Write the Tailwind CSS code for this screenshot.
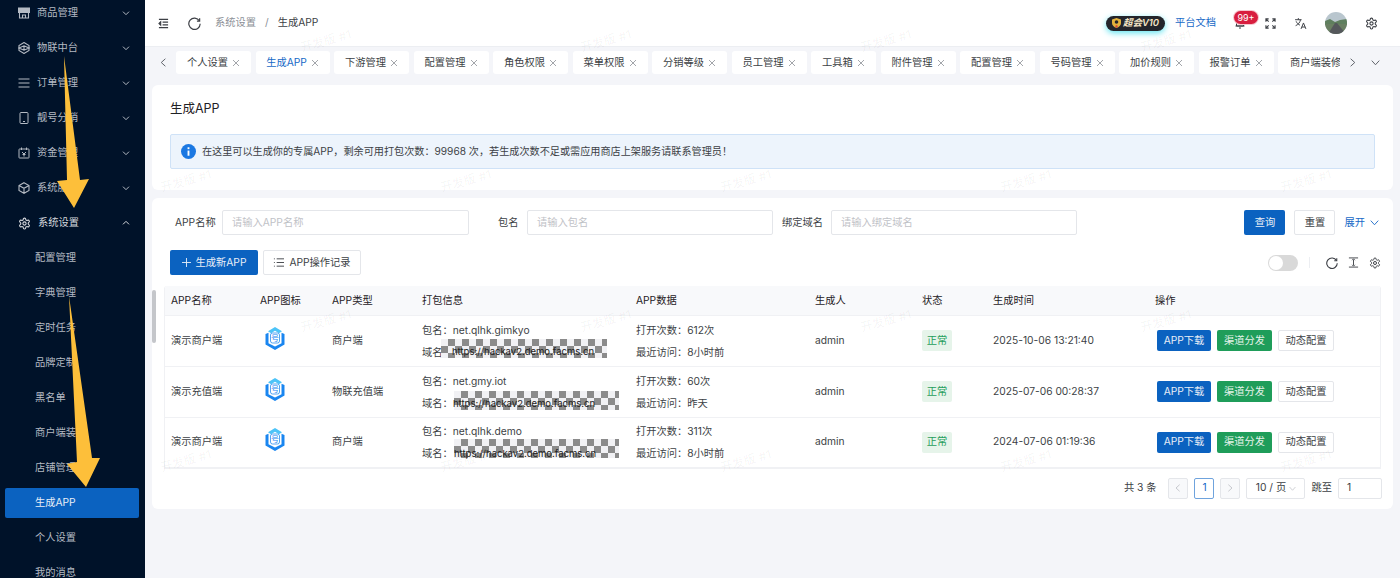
<!DOCTYPE html>
<html lang="zh-CN">
<head>
    <meta charset="UTF-8">
    <title>生成APP</title>
    <script src="https://cdn.jsdelivr.net/npm/@tailwindcss/browser@4"></script>
</head>
<body class="relative h-[578px] w-[1400px] overflow-hidden bg-[#f4f5f9] font-['Inter','Noto_Sans_CJK_SC',sans-serif] text-[10.25px] text-[#3c3f45]">
<div class="flex h-[578px]">
    <!-- Sidebar -->
    <aside class="w-[145px] shrink-0 overflow-hidden bg-[#001229] text-[#b4bac3]">
        <div class="-mt-[4.5px] pl-[5px] pr-[6px]">
            <div class="flex h-[35px] items-center pl-[13px] pr-[9px]">
                <svg class="mr-[7px] h-[12px] w-[12px]" viewBox="0 0 24 24" fill="none" stroke="currentColor" stroke-width="2.2"><path d="M1 2h22v9H1z" fill="currentColor"/><path d="M3 11v11h18V11M9 22v-6h6v6"/></svg>
                <span class="flex-1">商品管理</span>
                <svg class="h-[8px] w-[8px]" viewBox="0 0 12 12" fill="none" stroke="currentColor" stroke-width="1.5"><path d="M1.5 4L6 8.5 10.500 4"/></svg>
            </div>
            <div class="flex h-[35px] items-center pl-[13px] pr-[9px]">
                <svg class="mr-[7px] h-[12px] w-[12px]" viewBox="0 0 24 24" fill="none" stroke="currentColor" stroke-width="2.2"><path d="M12 1l10 6v10l-10 6-10-6V7z"/><path d="M2 12l10-4.500L22 12l-10 4.500zM12 7.500v9"/></svg>
                <span class="flex-1">物联中台</span>
                <svg class="h-[8px] w-[8px]" viewBox="0 0 12 12" fill="none" stroke="currentColor" stroke-width="1.5"><path d="M1.5 4L6 8.5 10.500 4"/></svg>
            </div>
            <div class="flex h-[35px] items-center pl-[13px] pr-[9px]">
                <svg class="mr-[7px] h-[12px] w-[12px]" viewBox="0 0 24 24" fill="none" stroke="currentColor" stroke-width="2.2"><path d="M1 4h22M1 12h22M1 20h22"/></svg>
                <span class="flex-1">订单管理</span>
                <svg class="h-[8px] w-[8px]" viewBox="0 0 12 12" fill="none" stroke="currentColor" stroke-width="1.5"><path d="M1.5 4L6 8.5 10.500 4"/></svg>
            </div>
            <div class="flex h-[35px] items-center pl-[13px] pr-[9px]">
                <svg class="mr-[7px] h-[12px] w-[12px]" viewBox="0 0 24 24" fill="none" stroke="currentColor" stroke-width="2"><rect x="4" y="1" width="16" height="22" rx="2"/><path d="M10 19h4"/></svg>
                <span class="flex-1">靓号分销</span>
                <svg class="h-[8px] w-[8px]" viewBox="0 0 12 12" fill="none" stroke="currentColor" stroke-width="1.5"><path d="M1.5 4L6 8.5 10.500 4"/></svg>
            </div>
            <div class="flex h-[35px] items-center pl-[13px] pr-[9px]">
                <svg class="mr-[7px] h-[12px] w-[12px]" viewBox="0 0 24 24" fill="none" stroke="currentColor" stroke-width="2"><rect x="2" y="4" width="20" height="18" rx="1"/><path d="M7 1v5M17 1v5M8 10l4 4 4-4M12 14v5M9 15h6"/></svg>
                <span class="flex-1">资金管理</span>
                <svg class="h-[8px] w-[8px]" viewBox="0 0 12 12" fill="none" stroke="currentColor" stroke-width="1.5"><path d="M1.5 4L6 8.5 10.500 4"/></svg>
            </div>
            <div class="flex h-[35px] items-center pl-[13px] pr-[9px]">
                <svg class="mr-[7px] h-[12px] w-[12px]" viewBox="0 0 24 24" fill="none" stroke="currentColor" stroke-width="2.2"><path d="M12 1.500l10 5.500v10l-10 5.500L2 17V7zM2 7l10 5.500L22 7M12 12.500v10"/></svg>
                <span class="flex-1">系统服务</span>
                <svg class="h-[8px] w-[8px]" viewBox="0 0 12 12" fill="none" stroke="currentColor" stroke-width="1.5"><path d="M1.5 4L6 8.5 10.500 4"/></svg>
            </div>
            <div class="flex h-[35px] items-center pl-[13px] pr-[9px] text-[#d5d8dd]">
                <svg class="mr-[7px] h-[13px] w-[13px]" viewBox="0 0 24 24" fill="none" stroke="currentColor" stroke-width="2"><path d="M12.22 2h-.44a2 2 0 0 0-2 2v.18a2 2 0 0 1-1 1.730l-.43.25a2 2 0 0 1-2 0l-.15-.08a2 2 0 0 0-2.730.73l-.22.38a2 2 0 0 0 .73 2.730l.15.1a2 2 0 0 1 1 1.720v.51a2 2 0 0 1-1 1.740l-.15.09a2 2 0 0 0-.73 2.730l.22.38a2 2 0 0 0 2.730.73l.15-.08a2 2 0 0 1 2 0l.43.25a2 2 0 0 1 1 1.730V20a2 2 0 0 0 2 2h.44a2 2 0 0 0 2-2v-.18a2 2 0 0 1 1-1.730l.43-.25a2 2 0 0 1 2 0l.15.08a2 2 0 0 0 2.730-.73l.22-.39a2 2 0 0 0-.73-2.730l-.15-.08a2 2 0 0 1-1-1.740v-.5a2 2 0 0 1 1-1.740l.15-.09a2 2 0 0 0 .73-2.730l-.22-.38a2 2 0 0 0-2.730-.73l-.15.08a2 2 0 0 1-2 0l-.43-.25a2 2 0 0 1-1-1.730V4a2 2 0 0 0-2-2z"/><circle cx="12" cy="12" r="3"/></svg>
                <span class="flex-1">系统设置</span>
                <svg class="h-[8px] w-[8px]" viewBox="0 0 12 12" fill="none" stroke="currentColor" stroke-width="1.5"><path d="M1.5 8L6 3.500 10.500 8"/></svg>
            </div>
            <div class="flex h-[35px] items-center pl-[30px]">配置管理</div>
            <div class="flex h-[35px] items-center pl-[30px]">字典管理</div>
            <div class="flex h-[35px] items-center pl-[30px]">定时任务</div>
            <div class="flex h-[35px] items-center pl-[30px]">品牌定制</div>
            <div class="flex h-[35px] items-center pl-[30px]">黑名单</div>
            <div class="flex h-[35px] items-center pl-[30px]">商户端装修</div>
            <div class="flex h-[35px] items-center pl-[30px]">店铺管理</div>
            <div class="my-[2.5px] flex h-[30px] items-center rounded-[2px] bg-[#0b62c0] pl-[30px] text-[#e8eef7]">生成APP</div>
            <div class="flex h-[35px] items-center pl-[30px]">个人设置</div>
            <div class="flex h-[35px] items-center pl-[30px]">我的消息</div>
        </div>
    </aside>

    <div class="flex min-w-0 flex-1 flex-col">
        <!-- Top bar -->
        <header class="flex h-[47px] shrink-0 items-center border-b border-[#eceef2] bg-white pl-[13px] pr-[22px]">
            <svg class="h-[11px] w-[11px] text-[#3c3f45]" viewBox="0 0 12 12" fill="none" stroke="currentColor" stroke-width="1.1"><path d="M1 1.500h10M5 4.500h6M5 7.500h6M1 10.500h10"/><path d="M3 4L1 6l2 2z" fill="currentColor"/></svg>
            <svg class="ml-[19px] h-[13px] w-[13px] text-[#3c3f45]" viewBox="0 0 24 24" fill="none" stroke="currentColor" stroke-width="2.200"><path d="M21 7a10.500 10.500 0 1 0 1.500 5.500"/><path d="M21.500 2.500V7.500H16.500"/></svg>
            <span class="ml-[14px] text-[#8b8f96]">系统设置</span>
            <span class="ml-[9px] text-[#8b8f96]">/</span>
            <span class="ml-[9px]">生成APP</span>
            <div class="ml-auto mr-[10px] flex h-[15px] w-[59px] items-center justify-center gap-[2px] rounded-full bg-[#23252b] text-[9.500px] font-semibold italic text-[#f4e6c8] shadow-[0_2px_6px_#5ee4f0]">
                <svg class="h-[10px] w-[9px]" viewBox="0 0 9 10"><path d="M4.500 0L9 1.500V5c0 2.500-2 4-4.500 5C2 9 0 7.500 0 5V1.500z" fill="#e3b23c"/><circle cx="4.500" cy="4" r="1.800" fill="#23252b"/><path d="M3 8l1.500-1L6 8 4.500 10z" fill="#d94a3d"/></svg>超会V10
            </div>
            <span class="text-[#1769c7]">平台文档</span>
            <div class="relative ml-[18px] h-[12px] w-[12px]">
                <svg class="h-[12px] w-[12px] text-[#3c3f45]" viewBox="0 0 24 24" fill="none" stroke="currentColor" stroke-width="2"><path d="M5 18V10a7 7 0 0 1 14 0v8zM3 18h18M10 22h4"/></svg>
                <span class="absolute -top-[6px] -right-[12px] flex h-[13px] w-[24px] items-center justify-center rounded-full bg-[#d81e3f] text-[9px] text-white shadow-[0_0_0_1px_#f6c7cf]">99+</span>
            </div>
            <svg class="ml-[19px] h-[11px] w-[11px] text-[#3c3f45]" viewBox="0 0 12 12" fill="none" stroke="currentColor" stroke-width="1.200"><path d="M1 4V1h3M1 1l3 3M11 4V1H8M11 1L8 4M1 8v3h3M1 11l3-3M11 8v3H8M11 11L8 8"/></svg>
            <svg class="ml-[18px] h-[13px] w-[13px] text-[#3c3f45]" viewBox="0 0 24 24" fill="none" stroke="currentColor" stroke-width="1.800"><path d="M2 5h12M8 2v3M12 5c-1 5-4 9-9 11M4 8c1 3 4 6 7 7M13 22l4.500-11L22 22M14.500 18.500h6"/></svg>
            <svg class="ml-[18px] h-[22px] w-[22px] rounded-full" viewBox="0 0 22 22"><rect width="22" height="22" fill="#b9c6ce"/><path d="M0 9l5-2 5 3 5-2 7-1v6H0z" fill="#5f7f5e"/><path d="M0 12h22v10H0z" fill="#6a7f62"/><path d="M10 11h2l9 11H3z" fill="#55585c"/></svg>
            <svg class="ml-[18px] h-[13px] w-[13px] text-[#3c3f45]" viewBox="0 0 24 24" fill="none" stroke="currentColor" stroke-width="2"><path d="M12.22 2h-.44a2 2 0 0 0-2 2v.18a2 2 0 0 1-1 1.730l-.43.25a2 2 0 0 1-2 0l-.15-.08a2 2 0 0 0-2.730.73l-.22.38a2 2 0 0 0 .73 2.730l.15.1a2 2 0 0 1 1 1.720v.51a2 2 0 0 1-1 1.740l-.15.09a2 2 0 0 0-.73 2.730l.22.38a2 2 0 0 0 2.730.73l.15-.08a2 2 0 0 1 2 0l.43.25a2 2 0 0 1 1 1.730V20a2 2 0 0 0 2 2h.44a2 2 0 0 0 2-2v-.18a2 2 0 0 1 1-1.730l.43-.25a2 2 0 0 1 2 0l.15.08a2 2 0 0 0 2.730-.73l.22-.39a2 2 0 0 0-.73-2.730l-.15-.08a2 2 0 0 1-1-1.740v-.5a2 2 0 0 1 1-1.740l.15-.09a2 2 0 0 0 .73-2.730l-.22-.38a2 2 0 0 0-2.730-.73l-.15.08a2 2 0 0 1-2 0l-.43-.25a2 2 0 0 1-1-1.730V4a2 2 0 0 0-2-2z"/><circle cx="12" cy="12" r="3"/></svg>
        </header>

        <!-- Tabs -->
        <div class="flex h-[31px] shrink-0 items-start pt-[4px]">
            <div class="flex h-[23px] w-[31px] shrink-0 items-center justify-center pb-[1px] pl-[6px] text-[#5c6068]">
                <svg class="h-[9px] w-[9px]" viewBox="0 0 12 12" fill="none" stroke="currentColor" stroke-width="1.300"><path d="M8.500 1L3 6l5.500 5"/></svg>
            </div>
            <div class="flex w-[1164px] shrink-0 gap-[4.500px] overflow-hidden">
                <div class="flex h-[23px] w-[75px] shrink-0 items-center justify-center gap-[4px] rounded-[3px] bg-white">个人设置<svg class="h-[8px] w-[8px] text-[#8b8f96]" viewBox="0 0 8 8" fill="none" stroke="currentColor" stroke-width=".8"><path d="M1 1l6 6M7 1L1 7"/></svg></div>
                <div class="flex h-[23px] w-[74px] shrink-0 items-center justify-center gap-[4px] rounded-[3px] bg-white text-[#1769c7]">生成APP<svg class="h-[8px] w-[8px] text-[#8b8f96]" viewBox="0 0 8 8" fill="none" stroke="currentColor" stroke-width=".8"><path d="M1 1l6 6M7 1L1 7"/></svg></div>
                <div class="flex h-[23px] w-[75px] shrink-0 items-center justify-center gap-[4px] rounded-[3px] bg-white">下游管理<svg class="h-[8px] w-[8px] text-[#8b8f96]" viewBox="0 0 8 8" fill="none" stroke="currentColor" stroke-width=".8"><path d="M1 1l6 6M7 1L1 7"/></svg></div>
                <div class="flex h-[23px] w-[75px] shrink-0 items-center justify-center gap-[4px] rounded-[3px] bg-white">配置管理<svg class="h-[8px] w-[8px] text-[#8b8f96]" viewBox="0 0 8 8" fill="none" stroke="currentColor" stroke-width=".8"><path d="M1 1l6 6M7 1L1 7"/></svg></div>
                <div class="flex h-[23px] w-[75px] shrink-0 items-center justify-center gap-[4px] rounded-[3px] bg-white">角色权限<svg class="h-[8px] w-[8px] text-[#8b8f96]" viewBox="0 0 8 8" fill="none" stroke="currentColor" stroke-width=".8"><path d="M1 1l6 6M7 1L1 7"/></svg></div>
                <div class="flex h-[23px] w-[75px] shrink-0 items-center justify-center gap-[4px] rounded-[3px] bg-white">菜单权限<svg class="h-[8px] w-[8px] text-[#8b8f96]" viewBox="0 0 8 8" fill="none" stroke="currentColor" stroke-width=".8"><path d="M1 1l6 6M7 1L1 7"/></svg></div>
                <div class="flex h-[23px] w-[75px] shrink-0 items-center justify-center gap-[4px] rounded-[3px] bg-white">分销等级<svg class="h-[8px] w-[8px] text-[#8b8f96]" viewBox="0 0 8 8" fill="none" stroke="currentColor" stroke-width=".8"><path d="M1 1l6 6M7 1L1 7"/></svg></div>
                <div class="flex h-[23px] w-[75px] shrink-0 items-center justify-center gap-[4px] rounded-[3px] bg-white">员工管理<svg class="h-[8px] w-[8px] text-[#8b8f96]" viewBox="0 0 8 8" fill="none" stroke="currentColor" stroke-width=".8"><path d="M1 1l6 6M7 1L1 7"/></svg></div>
                <div class="flex h-[23px] w-[65px] shrink-0 items-center justify-center gap-[4px] rounded-[3px] bg-white">工具箱<svg class="h-[8px] w-[8px] text-[#8b8f96]" viewBox="0 0 8 8" fill="none" stroke="currentColor" stroke-width=".8"><path d="M1 1l6 6M7 1L1 7"/></svg></div>
                <div class="flex h-[23px] w-[75px] shrink-0 items-center justify-center gap-[4px] rounded-[3px] bg-white">附件管理<svg class="h-[8px] w-[8px] text-[#8b8f96]" viewBox="0 0 8 8" fill="none" stroke="currentColor" stroke-width=".8"><path d="M1 1l6 6M7 1L1 7"/></svg></div>
                <div class="flex h-[23px] w-[75px] shrink-0 items-center justify-center gap-[4px] rounded-[3px] bg-white">配置管理<svg class="h-[8px] w-[8px] text-[#8b8f96]" viewBox="0 0 8 8" fill="none" stroke="currentColor" stroke-width=".8"><path d="M1 1l6 6M7 1L1 7"/></svg></div>
                <div class="flex h-[23px] w-[75px] shrink-0 items-center justify-center gap-[4px] rounded-[3px] bg-white">号码管理<svg class="h-[8px] w-[8px] text-[#8b8f96]" viewBox="0 0 8 8" fill="none" stroke="currentColor" stroke-width=".8"><path d="M1 1l6 6M7 1L1 7"/></svg></div>
                <div class="flex h-[23px] w-[75px] shrink-0 items-center justify-center gap-[4px] rounded-[3px] bg-white">加价规则<svg class="h-[8px] w-[8px] text-[#8b8f96]" viewBox="0 0 8 8" fill="none" stroke="currentColor" stroke-width=".8"><path d="M1 1l6 6M7 1L1 7"/></svg></div>
                <div class="flex h-[23px] w-[75px] shrink-0 items-center justify-center gap-[4px] rounded-[3px] bg-white">报警订单<svg class="h-[8px] w-[8px] text-[#8b8f96]" viewBox="0 0 8 8" fill="none" stroke="currentColor" stroke-width=".8"><path d="M1 1l6 6M7 1L1 7"/></svg></div>
                <div class="flex h-[23px] w-[62px] shrink-0 items-center rounded-l-[3px] bg-white pl-[12px] whitespace-nowrap">商户端装修</div>
            </div>
            <div class="flex h-[23px] flex-1 items-center pb-[1px] pl-[8px] text-[#5c6068]">
                <svg class="h-[9px] w-[9px]" viewBox="0 0 12 12" fill="none" stroke="currentColor" stroke-width="1.300"><path d="M3.500 1L9 6l-5.500 5"/></svg>
                <svg class="ml-[14px] h-[9px] w-[9px]" viewBox="0 0 12 12" fill="none" stroke="currentColor" stroke-width="1.300"><path d="M1 3.500L6 9l5-5.500"/></svg>
            </div>
        </div>

        <!-- Content -->
        <main class="flex flex-col gap-[8px] pl-[7px] pr-[7px] pt-[7px]">
            <section class="h-[105px] rounded-[6px] bg-white px-[18px] pt-[15px]">
                <h1 class="text-[12.500px] leading-[17px] font-normal text-[#1f2125]">生成APP</h1>
                <div class="mt-[17px] flex h-[35px] items-center rounded-[2px] border border-[#cfe2f7] bg-[#edf4fc] pl-[10px]">
                    <svg class="h-[15px] w-[15px]" viewBox="0 0 16 16"><circle cx="8" cy="8" r="8" fill="#1b78e2"/><rect x="7" y="7" width="2" height="5.500" fill="#fff"/><rect x="7" y="3.500" width="2" height="2" fill="#fff"/></svg>
                    <span class="ml-[6px] text-[10.150px]">在这里可以生成你的专属APP，剩余可用打包次数：99968 次，若生成次数不足或需应用商店上架服务请联系管理员！</span>
                </div>
            </section>

            <section class="h-[311px] rounded-[6px] bg-white pt-[12px]">
                <!-- Search -->
                <div class="flex h-[25px] items-center pl-[23px] pr-[14px]">
                    <span class="w-[47px]">APP名称</span>
                    <div class="flex h-[25px] w-[247px] items-center rounded-[2px] border border-[#e4e6ea] pl-[9px] text-[#bfc2c7]">请输入APP名称</div>
                    <span class="ml-[29px] w-[29px]">包名</span>
                    <div class="flex h-[25px] w-[246px] items-center rounded-[2px] border border-[#e4e6ea] pl-[9px] text-[#bfc2c7]">请输入包名</div>
                    <span class="ml-[9px] w-[49px]">绑定域名</span>
                    <div class="flex h-[25px] w-[246px] items-center rounded-[2px] border border-[#e4e6ea] pl-[9px] text-[#bfc2c7]">请输入绑定域名</div>
                    <button class="ml-auto flex h-[25px] w-[41px] items-center justify-center rounded-[2px] bg-[#0b62c0] text-[#e8eef7]">查询</button>
                    <button class="ml-[9px] flex h-[25px] w-[41px] items-center justify-center rounded-[2px] border border-[#e4e6ea]">重置</button>
                    <span class="ml-[9px] text-[#1769c7]">展开</span>
                    <svg class="ml-[5px] h-[9px] w-[9px] text-[#1769c7]" viewBox="0 0 12 12" fill="none" stroke="currentColor" stroke-width="1.200"><path d="M1 3.500L6 9l5-5.500"/></svg>
                </div>

                <!-- Toolbar -->
                <div class="mt-[15px] flex h-[25px] items-center pl-[18px] pr-[12px]">
                    <button class="flex h-[25px] w-[88px] items-center justify-center gap-[5px] rounded-[2px] bg-[#0b62c0] text-[#e8eef7]">
                        <svg class="h-[9px] w-[9px]" viewBox="0 0 10 10" fill="none" stroke="currentColor" stroke-width="1"><path d="M5 0v10M0 5h10"/></svg>生成新APP
                    </button>
                    <button class="ml-[5px] flex h-[25px] w-[98px] items-center justify-center gap-[5px] rounded-[2px] border border-[#e4e6ea]">
                        <svg class="h-[11px] w-[11px]" viewBox="0 0 12 12" fill="none" stroke="currentColor" stroke-width="1"><path d="M4 2h8M4 6h8M4 10h8M1 2h1M1 6h1M1 10h1"/></svg>APP操作记录
                    </button>
                    <div class="ml-auto flex h-[16px] w-[30px] items-center rounded-full bg-[#d9d9d9] pl-[1px]"><span class="h-[14px] w-[14px] rounded-full bg-white"></span></div>
                    <span class="ml-[11px] mr-px h-[11px] w-px bg-[#eceef2]"></span>
                    <svg class="ml-[15px] h-[12px] w-[12px]" viewBox="0 0 24 24" fill="none" stroke="currentColor" stroke-width="2.200"><path d="M21 7a10.500 10.500 0 1 0 1.500 5.500"/><path d="M21.500 2.500V7.500H16.500"/></svg>
                    <svg class="ml-[10px] h-[11px] w-[11px]" viewBox="0 0 12 12" fill="none" stroke="currentColor" stroke-width="1"><path d="M1 1h10M1 11h10M6 3v6"/><path d="M4.500 3.500L6 2l1.500 1.500M4.500 8.500L6 10l1.500-1.500"/></svg>
                    <svg class="ml-[10px] h-[12px] w-[12px]" viewBox="0 0 24 24" fill="none" stroke="currentColor" stroke-width="2"><path d="M12.22 2h-.44a2 2 0 0 0-2 2v.18a2 2 0 0 1-1 1.730l-.43.25a2 2 0 0 1-2 0l-.15-.08a2 2 0 0 0-2.730.73l-.22.38a2 2 0 0 0 .73 2.730l.15.1a2 2 0 0 1 1 1.720v.51a2 2 0 0 1-1 1.740l-.15.09a2 2 0 0 0-.73 2.730l.22.38a2 2 0 0 0 2.730.73l.15-.08a2 2 0 0 1 2 0l.43.25a2 2 0 0 1 1 1.730V20a2 2 0 0 0 2 2h.44a2 2 0 0 0 2-2v-.18a2 2 0 0 1 1-1.730l.43-.25a2 2 0 0 1 2 0l.15.08a2 2 0 0 0 2.730-.73l.22-.39a2 2 0 0 0-.73-2.730l-.15-.08a2 2 0 0 1-1-1.740v-.5a2 2 0 0 1 1-1.740l.15-.09a2 2 0 0 0 .73-2.730l-.22-.38a2 2 0 0 0-2.730-.73l-.15.08a2 2 0 0 1-2 0l-.43-.25a2 2 0 0 1-1-1.730V4a2 2 0 0 0-2-2z"/><circle cx="12" cy="12" r="3"/></svg>
                </div>

                <!-- Table -->
                <div class="mx-[12px] mt-[11px] w-[1217px] overflow-hidden rounded-t-[3px] border border-[#f0f1f4] border-t-0">
                    <table class="w-full table-fixed border-collapse text-left">
                        <thead class="bg-[#f8f9fb] text-[#1f2125]">
                            <tr class="h-[29px]">
                                <th class="w-[89px] pl-[6px] font-normal">APP名称</th>
                                <th class="w-[72px] pl-[6px] font-normal">APP图标</th>
                                <th class="w-[90px] pl-[6px] font-normal">APP类型</th>
                                <th class="w-[214px] pl-[6px] font-normal">打包信息</th>
                                <th class="w-[179px] pl-[6px] font-normal">APP数据</th>
                                <th class="w-[107px] pl-[6px] font-normal">生成人</th>
                                <th class="w-[71px] pl-[6px] font-normal">状态</th>
                                <th class="w-[162px] pl-[6px] font-normal">生成时间</th>
                                <th class="pl-[6px] font-normal">操作</th>
                            </tr>
                        </thead>
                        <tbody>
                            <tr class="h-[51px] border-t border-[#f0f1f4]">
                                <td class="pl-[6px]">演示商户端</td>
                                <td class="pl-[11px]">
                                    <svg class="-mt-[5px] block h-[23px] w-[20px]" viewBox="0 0 20 23"><path d="M10 0l7 4.300-3 1.900-4-2.500-4 2.500-3-1.900z" fill="#4cc4f8"/><path d="M.5 7l3-1.200v10.400l6.500 3.400 6.500-3.400V5.800l3 1.200v10.500L10 23 .5 17.500z" fill="#1a86f0"/><rect x="5.500" y="6" width="9" height="10" rx="2" fill="none" stroke="#2a8ff0" stroke-width=".8"/><text x="10" y="14" text-anchor="middle" font-size="8" fill="#1a86f0">号</text></svg>
                                </td>
                                <td class="pl-[6px]">商户端</td>
                                <td class="pl-[6px]">
                                    <div class="leading-[22px]">包名：net.qlhk.gimkyo</div>
                                    <div class="relative leading-[22px]">域名<span class="absolute left-[19px] -top-[1.500px] h-[19px] w-[166px] bg-[conic-gradient(#8b8b8b_25%,#f1f1f4_0_50%,#8b8b8b_0_75%,#f1f1f4_0)] bg-[length:14px_14px] pl-[11px] text-[9.500px] leading-[26px] text-[#222] whitespace-nowrap">https://hackav2.demo.facms.cn</span></div>
                                </td>
                                <td class="pl-[6px]">
                                    <div class="leading-[22px]">打开次数：612次</div>
                                    <div class="leading-[22px]">最近访问：8小时前</div>
                                </td>
                                <td class="pl-[6px]">admin</td>
                                <td class="pl-[6px]"><span class="flex h-[21px] w-[30px] items-center justify-center rounded-[2px] bg-[#e6f4ea] text-[#1f9d5a]">正常</span></td>
                                <td class="pl-[6px]">2025-10-06 13:21:40</td>
                                <td class="pl-[8px]">
                                    <div class="flex gap-[6px]">
                                        <button class="h-[21px] w-[54px] rounded-[2px] bg-[#0b62c0] text-[#e8eef7]">APP下载</button>
                                        <button class="h-[21px] w-[55px] rounded-[2px] bg-[#1f9d5a] text-[#e4f3ea]">渠道分发</button>
                                        <button class="h-[21px] w-[56px] rounded-[2px] border border-[#e4e6ea]">动态配置</button>
                                    </div>
                                </td>
                            </tr>
                            <tr class="h-[51px] border-t border-[#f0f1f4]">
                                <td class="pl-[6px]">演示充值端</td>
                                <td class="pl-[11px]">
                                    <svg class="-mt-[5px] block h-[23px] w-[20px]" viewBox="0 0 20 23"><path d="M10 0l7 4.300-3 1.900-4-2.500-4 2.500-3-1.900z" fill="#4cc4f8"/><path d="M.5 7l3-1.200v10.400l6.500 3.400 6.500-3.400V5.800l3 1.200v10.500L10 23 .5 17.500z" fill="#1a86f0"/><rect x="5.500" y="6" width="9" height="10" rx="2" fill="none" stroke="#2a8ff0" stroke-width=".8"/><text x="10" y="14" text-anchor="middle" font-size="8" fill="#1a86f0">号</text></svg>
                                </td>
                                <td class="pl-[6px]">物联充值端</td>
                                <td class="pl-[6px]">
                                    <div class="leading-[22px]">包名：net.gmy.iot</div>
                                    <div class="relative leading-[22px]">域名：<span class="absolute left-[32px] -top-[.500px] h-[19px] w-[165px] bg-[conic-gradient(#8b8b8b_25%,#f1f1f4_0_50%,#8b8b8b_0_75%,#f1f1f4_0)] bg-[length:14px_14px] -indent-[1px] text-[9.500px] leading-[26px] text-[#222] whitespace-nowrap">https://hackav2.demo.facms.cn</span></div>
                                </td>
                                <td class="pl-[6px]">
                                    <div class="leading-[22px]">打开次数：60次</div>
                                    <div class="leading-[22px]">最近访问：昨天</div>
                                </td>
                                <td class="pl-[6px]">admin</td>
                                <td class="pl-[6px]"><span class="flex h-[21px] w-[30px] items-center justify-center rounded-[2px] bg-[#e6f4ea] text-[#1f9d5a]">正常</span></td>
                                <td class="pl-[6px]">2025-07-06 00:28:37</td>
                                <td class="pl-[8px]">
                                    <div class="flex gap-[6px]">
                                        <button class="h-[21px] w-[54px] rounded-[2px] bg-[#0b62c0] text-[#e8eef7]">APP下载</button>
                                        <button class="h-[21px] w-[55px] rounded-[2px] bg-[#1f9d5a] text-[#e4f3ea]">渠道分发</button>
                                        <button class="h-[21px] w-[56px] rounded-[2px] border border-[#e4e6ea]">动态配置</button>
                                    </div>
                                </td>
                            </tr>
                            <tr class="h-[50px] border-y border-[#f0f1f4]">
                                <td class="pl-[6px]">演示商户端</td>
                                <td class="pl-[11px]">
                                    <svg class="-mt-[5px] block h-[23px] w-[20px]" viewBox="0 0 20 23"><path d="M10 0l7 4.300-3 1.900-4-2.500-4 2.500-3-1.900z" fill="#4cc4f8"/><path d="M.5 7l3-1.200v10.400l6.500 3.400 6.500-3.400V5.800l3 1.200v10.500L10 23 .5 17.500z" fill="#1a86f0"/><rect x="5.500" y="6" width="9" height="10" rx="2" fill="none" stroke="#2a8ff0" stroke-width=".8"/><text x="10" y="14" text-anchor="middle" font-size="8" fill="#1a86f0">号</text></svg>
                                </td>
                                <td class="pl-[6px]">商户端</td>
                                <td class="pl-[6px]">
                                    <div class="leading-[22px]">包名：net.qlhk.demo</div>
                                    <div class="relative leading-[22px]">域名：<span class="absolute left-[32px] -top-[3.500px] h-[19px] w-[165px] bg-[conic-gradient(#8b8b8b_25%,#f1f1f4_0_50%,#8b8b8b_0_75%,#f1f1f4_0)] bg-[length:14px_14px] text-[9.500px] leading-[30px] text-[#222] whitespace-nowrap">https://hackav2.demo.facms.cn</span></div>
                                </td>
                                <td class="pl-[6px]">
                                    <div class="leading-[22px]">打开次数：311次</div>
                                    <div class="leading-[22px]">最近访问：8小时前</div>
                                </td>
                                <td class="pl-[6px]">admin</td>
                                <td class="pl-[6px]"><span class="flex h-[21px] w-[30px] items-center justify-center rounded-[2px] bg-[#e6f4ea] text-[#1f9d5a]">正常</span></td>
                                <td class="pl-[6px]">2024-07-06 01:19:36</td>
                                <td class="pl-[8px]">
                                    <div class="flex gap-[6px]">
                                        <button class="h-[21px] w-[54px] rounded-[2px] bg-[#0b62c0] text-[#e8eef7]">APP下载</button>
                                        <button class="h-[21px] w-[55px] rounded-[2px] bg-[#1f9d5a] text-[#e4f3ea]">渠道分发</button>
                                        <button class="h-[21px] w-[56px] rounded-[2px] border border-[#e4e6ea]">动态配置</button>
                                    </div>
                                </td>
                            </tr>
                        </tbody>
                    </table>
                </div>

                <!-- Pagination -->
                <div class="mt-[9px] flex h-[21px] items-center justify-end pr-[11px]">
                    <span>共 3 条</span>
                    <span class="ml-[12px] flex h-[21px] w-[20px] items-center justify-center rounded-[2px] border border-[#e4e6ea] bg-[#f8f9fb] text-[#bfc2c7]"><svg class="h-[8px] w-[8px]" viewBox="0 0 12 12" fill="none" stroke="currentColor" stroke-width="1.300"><path d="M8.500 1L3 6l5.500 5"/></svg></span>
                    <span class="ml-[6px] flex h-[21px] w-[20px] items-center justify-center rounded-[2px] border border-[#6fa3dd] text-[#1769c7]">1</span>
                    <span class="ml-[6px] flex h-[21px] w-[20px] items-center justify-center rounded-[2px] border border-[#e4e6ea] bg-[#f8f9fb] text-[#bfc2c7]"><svg class="h-[8px] w-[8px]" viewBox="0 0 12 12" fill="none" stroke="currentColor" stroke-width="1.300"><path d="M3.500 1L9 6l-5.500 5"/></svg></span>
                    <span class="ml-[6px] flex h-[21px] w-[59px] items-center justify-center gap-[3px] rounded-[2px] border border-[#e4e6ea]">10 / 页<svg class="h-[7px] w-[7px] text-[#bfc2c7]" viewBox="0 0 12 12" fill="none" stroke="currentColor" stroke-width="1.300"><path d="M1 3.500L6 9l5-5.500"/></svg></span>
                    <span class="ml-[6px]">跳至</span>
                    <span class="ml-[6px] flex h-[21px] w-[44px] items-center rounded-[2px] border border-[#e4e6ea] pl-[8px]">1</span>
                </div>
            </section>
        </main>
    </div>
</div>

<!-- Sidebar scrollbar -->
<div class="absolute left-[152px] top-[290px] h-[53px] w-[4px] rounded-full bg-[#c4c6ca]"></div>

<!-- Watermark -->
<div class="pointer-events-none absolute inset-0 text-[12px] text-black/[0.05]">
    <span class="absolute left-[300px] top-[32px] -rotate-15">开发版 #1</span>
    <span class="absolute left-[580px] top-[32px] -rotate-15">开发版 #1</span>
    <span class="absolute left-[860px] top-[32px] -rotate-15">开发版 #1</span>
    <span class="absolute left-[1140px] top-[32px] -rotate-15">开发版 #1</span>
    <span class="absolute left-[160px] top-[172px] -rotate-15">开发版 #1</span>
    <span class="absolute left-[440px] top-[172px] -rotate-15">开发版 #1</span>
    <span class="absolute left-[720px] top-[172px] -rotate-15">开发版 #1</span>
    <span class="absolute left-[1000px] top-[172px] -rotate-15">开发版 #1</span>
    <span class="absolute left-[1280px] top-[172px] -rotate-15">开发版 #1</span>
    <span class="absolute left-[300px] top-[312px] -rotate-15">开发版 #1</span>
    <span class="absolute left-[580px] top-[312px] -rotate-15">开发版 #1</span>
    <span class="absolute left-[860px] top-[312px] -rotate-15">开发版 #1</span>
    <span class="absolute left-[1140px] top-[312px] -rotate-15">开发版 #1</span>
    <span class="absolute left-[160px] top-[452px] -rotate-15">开发版 #1</span>
    <span class="absolute left-[440px] top-[452px] -rotate-15">开发版 #1</span>
    <span class="absolute left-[720px] top-[452px] -rotate-15">开发版 #1</span>
    <span class="absolute left-[1000px] top-[452px] -rotate-15">开发版 #1</span>
    <span class="absolute left-[1280px] top-[452px] -rotate-15">开发版 #1</span>
</div>

<!-- Yellow annotation arrows -->
<svg class="pointer-events-none absolute left-0 top-0 h-[578px] w-[145px]" viewBox="0 0 145 578">
    <path d="M64 56L80 180 89 179 74 208 57 181 67 180z" fill="#fdbf3a"/>
    <path d="M69 296L92 458 100 458 86 487 67 464 77 462z" fill="#fdbf3a"/>
</svg>
</body>
</html>
